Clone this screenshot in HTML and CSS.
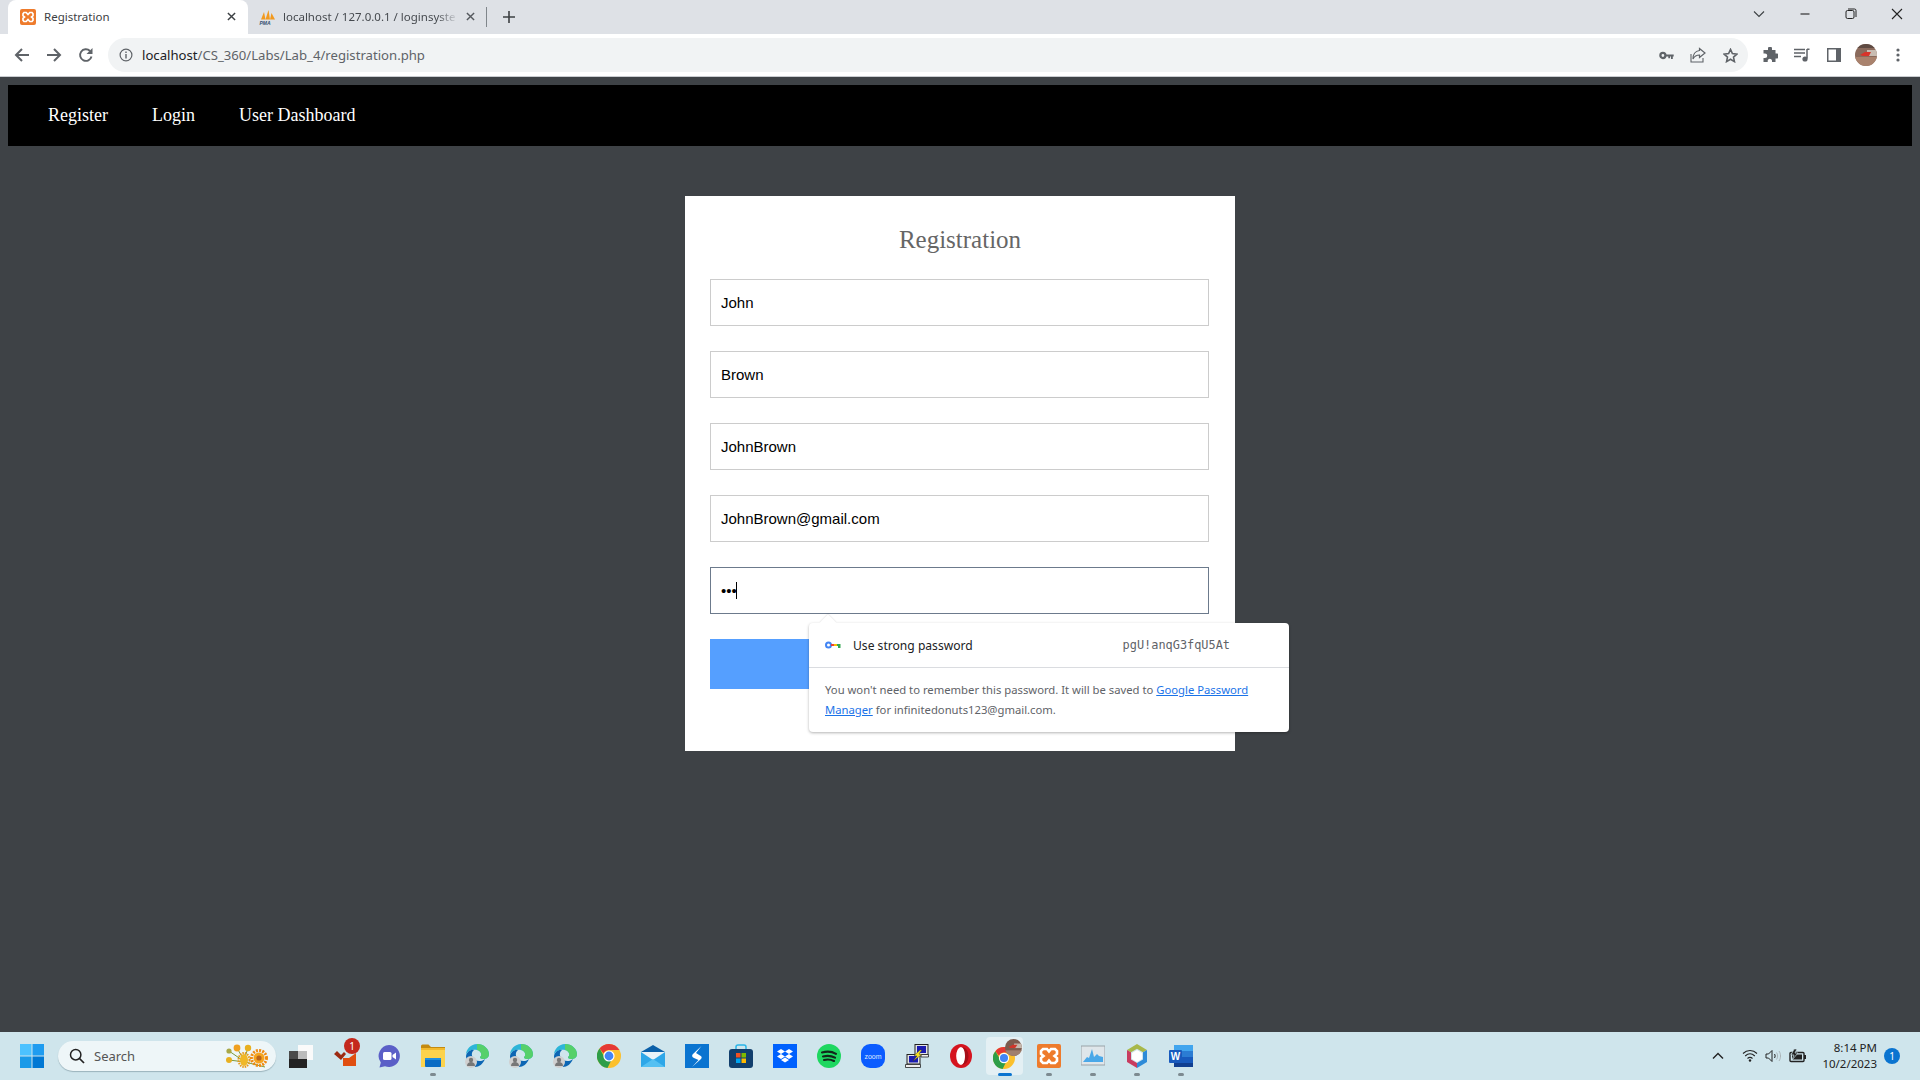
FILE: index.html
```html
<!DOCTYPE html>
<html lang="en">
<head>
<meta charset="utf-8">
<title>Registration</title>
<link rel="stylesheet" href="styles.css">
</head>
<body>
<div class="screen">
  <header class="chrome">
    <div class="tabstrip">
      <div class="tab tab-active">
        <svg class="favicon" viewBox="0 0 16 16"><rect width="16" height="16" rx="2" fill="#ee7b2c"/><path d="M4 3.500h2.200l1.800 2 1.800-2H12l1 1.200v2L11.500 8 13 9.300v2L12 12.500H9.800L8 10.500l-1.800 2H4l-1-1.200v-2L4.500 8 3 6.700v-2z" fill="none" stroke="#fff" stroke-width="1.700"/></svg>
        <span class="tab-title">Registration</span>
        <svg class="tab-close" viewBox="0 0 10 10"><path d="M1 1l8 8M9 1l-8 8" stroke="#3c4043" stroke-width="1.600"/></svg>
      </div>
      <div class="tab tab-idle">
        <svg class="favicon" viewBox="0 0 18 16"><path d="M2 10.500L5 3l1.500 7.500zM6.500 10.500L9.500 1l1.500 9.500zM11 10.500L12.500 4l3.500 6.500z" fill="#f29a1f"/><text x="0.500" y="15.500" class="pma">PMA</text></svg>
        <span class="tab-title tab-title-fade">localhost / 127.0.0.1 / loginsyste</span>
        <svg class="tab-close" viewBox="0 0 10 10"><path d="M1 1l8 8M9 1l-8 8" stroke="#55595e" stroke-width="1.600"/></svg>
      </div>
      <span class="tab-sep"></span>
      <svg class="new-tab" viewBox="0 0 12 12"><path d="M6 0v12M0 6h12" stroke="#3c4043" stroke-width="1.600"/></svg>
      <div class="caption">
        <span class="cap-btn"><svg viewBox="0 0 12 8" width="12" height="8"><path d="M1 1.500l5 5 5-5" fill="none" stroke="#3c4043" stroke-width="1.100"/></svg></span>
        <span class="cap-btn"><svg viewBox="0 0 12 8" width="12" height="8"><path d="M1.500 4h9" stroke="#222" stroke-width="1.100"/></svg></span>
        <span class="cap-btn"><svg viewBox="0 0 12 12" width="12" height="12"><rect x="1" y="2.500" width="8" height="8" rx="1.500" fill="none" stroke="#222"/><path d="M3 1h6.500A1.500 1.500 0 0 1 11 2.500V9" fill="none" stroke="#222"/></svg></span>
        <span class="cap-btn"><svg viewBox="0 0 12 12" width="12" height="12"><path d="M1 1l10 10M11 1L1 11" stroke="#222" stroke-width="1.100"/></svg></span>
      </div>
    </div>
    <div class="toolbar">
      <span class="tool"><svg viewBox="0 0 16 16" width="16" height="16"><path d="M15 8H2M8 2L2 8l6 6" fill="none" stroke="#5f6368" stroke-width="2"/></svg></span>
      <span class="tool"><svg viewBox="0 0 16 16" width="16" height="16"><path d="M1 8h13M8 2l6 6-6 6" fill="none" stroke="#5f6368" stroke-width="2"/></svg></span>
      <span class="tool"><svg viewBox="0 0 16 16" width="16" height="16"><path d="M13.500 9.500A5.800 5.800 0 1 1 12 4" fill="none" stroke="#5f6368" stroke-width="1.900"/><path d="M14.500 1v6h-6z" fill="#5f6368"/></svg></span>
      <div class="omnibox">
        <svg class="info" viewBox="0 0 14 14"><circle cx="7" cy="7" r="5.900" fill="none" stroke="#5f6368" stroke-width="1.200"/><path d="M7 6v4.500M7 3.500v1.500" stroke="#5f6368" stroke-width="1.400"/></svg>
        <span class="url"><span class="url-host">localhost</span>/CS_360/Labs/Lab_4/registration.php</span>
        <div class="omni-actions">
          <span class="omni-btn"><svg viewBox="0 0 16 10" width="15" height="9"><circle cx="4" cy="5" r="2.800" fill="none" stroke="#5f6368" stroke-width="2.500"/><path d="M7 4h9v2h-1v3h-2V6h-1v2H10V6H7z" fill="#5f6368"/></svg></span>
          <span class="omni-btn"><svg viewBox="0 0 16 16" width="16" height="16"><path d="M1 7v8h12v-4" fill="none" stroke="#5f6368" stroke-width="1.100"/><path d="M9.500 1.500l5.500 4.500-5.500 4.500V8C6.500 8 4.500 9 3 12c0-4 2-8 6.500-8.500z" fill="none" stroke="#5f6368" stroke-width="1.200"/></svg></span>
          <span class="omni-btn"><svg viewBox="0 0 16 16" width="15" height="15"><path d="M8 1.500l2 4.500 4.800.5-3.600 3.200 1 4.800L8 12l-4.200 2.500 1-4.800L1.200 6.500 6 6z" fill="none" stroke="#5f6368" stroke-width="1.700"/></svg></span>
        </div>
      </div>
      <span class="tool"><svg viewBox="0 0 16 16" width="16" height="16"><path d="M6 1.500a2 2 0 0 1 4 0V3h3.500v3.500H15a2.300 2.300 0 0 1 0 5h-1.500V15H10v-1.500a2.200 2.200 0 0 0-4.300 0V15H1.500v-4H3a2 2 0 0 0 0-4.500H1.500V3H6z" fill="#5f6368"/></svg></span>
      <span class="tool"><svg viewBox="0 0 16 14" width="16" height="14"><path d="M0 1.500h11M0 5h11M0 8.500h7" stroke="#5f6368" stroke-width="1.300"/><path d="M13 1v9.500" stroke="#5f6368" stroke-width="1.500"/><path d="M13 .5h2.500V2H13z" fill="#5f6368"/><circle cx="11" cy="11" r="2.600" fill="#5f6368"/></svg></span>
      <span class="tool"><svg viewBox="0 0 14 14" width="14" height="14"><rect width="14" height="14" fill="#5f6368"/><rect x="1.500" y="1.500" width="7.500" height="11" fill="#fff"/></svg></span>
      <span class="tool"><svg viewBox="0 0 22 22" width="22" height="22"><defs><clipPath id="av"><circle cx="11" cy="11" r="11"/></clipPath></defs><g clip-path="url(#av)"><rect width="22" height="22" fill="#8a6a5c"/><rect y="13" width="22" height="9" fill="#a9826d"/><rect x="12" y="6" width="10" height="6" fill="#c9bdb3"/><path d="M5 11l5-3h6l-2 4H8z" fill="#d8342a"/><rect y="0" width="22" height="4" fill="#5e4a42"/></g></svg></span>
      <span class="tool"><svg viewBox="0 0 4 14" width="4" height="14"><circle cx="2" cy="2" r="1.600" fill="#5f6368"/><circle cx="2" cy="7" r="1.600" fill="#5f6368"/><circle cx="2" cy="12" r="1.600" fill="#5f6368"/></svg></span>
    </div>
  </header>

  <main class="page">
    <nav class="topnav">
      <a class="navlink">Register</a>
      <a class="navlink">Login</a>
      <a class="navlink">User Dashboard</a>
    </nav>
    <section class="card">
      <h2 class="card-title">Registration</h2>
      <form class="form">
        <input class="field" type="text" value="John" readonly>
        <input class="field" type="text" value="Brown" readonly>
        <input class="field" type="text" value="JohnBrown" readonly>
        <input class="field" type="text" value="JohnBrown@gmail.com" readonly>
        <div class="field-wrap">
          <input class="field field-focus" type="password" value="abc" readonly>
          <span class="caret"></span>
        </div>
        <div class="submit"></div>
      </form>
      <div class="pw-popup">
        <span class="pw-arrow"></span>
        <div class="pw-row">
          <svg class="pw-key" viewBox="0 0 16 8"><circle cx="3.500" cy="4" r="2.500" fill="none" stroke="#4285f4" stroke-width="2"/><path d="M6 4h3" stroke="#ea4335" stroke-width="2"/><path d="M9 3h3.500v2H9z" fill="#fbbc04"/><path d="M12 3h3.500v4H13V5h-1z" fill="#34a853"/></svg>
          <span class="pw-label">Use strong password</span>
          <span class="pw-value">pgU!anqG3fqU5At</span>
        </div>
        <div class="pw-note">
          <div class="pw-line">You won't need to remember this password. It will be saved to <a class="pw-link">Google Password</a></div>
          <div class="pw-line"><a class="pw-link">Manager</a> for infinitedonuts123@gmail.com.</div>
        </div>
      </div>
    </section>
  </main>

  <footer class="taskbar">
    <svg class="win" viewBox="0 0 24 24"><rect width="11.500" height="11.500" fill="#4cc2ff"/><rect x="12.500" width="11.500" height="11.500" fill="#1f9cf0"/><rect y="12.500" width="11.500" height="11.500" fill="#1a9ae8"/><rect x="12.500" y="12.500" width="11.500" height="11.500" fill="#0078d4"/></svg>
    <div class="search">
      <svg class="search-icon" viewBox="0 0 16 16"><circle cx="6.700" cy="6.700" r="5.200" fill="none" stroke="#222" stroke-width="1.500"/><path d="M10.500 10.500l4.500 4.500" stroke="#222" stroke-width="1.700"/></svg>
      <span class="search-text">Search</span>
      <svg class="flowers" viewBox="0 0 48 26"><path d="M5 8l16 11 20 5M13 5l8 14M24 5l-4 12M5 17l16 2" stroke="#7d9a3a" fill="none"/><circle cx="5" cy="8" r="2.600" fill="#a8a848"/><circle cx="13" cy="5" r="3.400" fill="#f0a020"/><circle cx="24" cy="5" r="3.200" fill="#e8b020"/><circle cx="5" cy="17" r="3" fill="#e8b020"/><ellipse cx="20" cy="17" rx="4" ry="6" fill="#f0b828"/><ellipse cx="20" cy="17" rx="5.500" ry="7" fill="none" stroke="#e89a18" stroke-width="2" stroke-dasharray="1.500 1"/><circle cx="35" cy="15" r="5.500" fill="#f6a520"/><circle cx="35" cy="15" r="7.500" fill="none" stroke="#f08a10" stroke-width="3" stroke-dasharray="2 1.200"/><circle cx="35" cy="15" r="2.600" fill="#b9651c"/></svg>
    </div>
    <div class="apps">
      <span class="app"><svg viewBox="0 0 24 24"><rect x="9" y="1" width="15" height="15" fill="#fafafa"/><rect x="9" y="7" width="9" height="9" fill="#b8b8b8"/><rect y="7" width="18" height="17" fill="#222"/><rect y="7" width="18" height="8" fill="#4a4a4a"/><rect x="9" y="7" width="9" height="8" fill="#bbb"/></svg></span>
      <span class="app"><svg viewBox="0 0 24 24"><path d="M1 10l3-3 4 4 3-3 2 2-5 6z" fill="#9c2a12"/><rect x="10" y="14" width="13" height="8" fill="#e04e10"/><path d="M16 14h7V9z" fill="#e04e10"/></svg><span class="app-badge">1</span></span>
      <span class="app"><svg viewBox="0 0 24 24"><path d="M12 1a11 11 0 1 1-4 21.300L2.500 23.500l1.300-5A11 11 0 0 1 12 1z" fill="#5b5fc7"/><rect x="6" y="8" width="8.500" height="8" rx="1.500" fill="#fff"/><path d="M15.500 11l3.500-2.500v7L15.500 13z" fill="#fff"/></svg></span>
      <span class="app app-open"><svg viewBox="0 0 24 24"><path d="M0 2a1.500 1.500 0 0 1 1.500-1.500h6L10 3h14v4H0z" fill="#c48a10"/><path d="M0 4h24v19H0z" fill="#fcd34d"/><path d="M0 4h24v2H0z" fill="#f2b92c"/><rect x="4" y="14" width="16" height="9" rx="1" fill="#0a6cc4"/><rect x="4" y="14" width="16" height="2" fill="#1f8fe0"/></svg></span>
      <span class="app"><svg viewBox="0 0 24 24"><use href="#edge"/></svg></span>
      <span class="app"><svg viewBox="0 0 24 24"><use href="#edge"/></svg></span>
      <span class="app"><svg viewBox="0 0 24 24"><use href="#edge"/></svg></span>
      <span class="app"><svg viewBox="0 0 24 24"><use href="#gchrome"/></svg></span>
      <span class="app"><svg viewBox="0 0 24 24"><path d="M0 8l12-7 12 7v2H0z" fill="#0a5fa8"/><rect y="8" width="24" height="15" fill="#2ea7e8"/><path d="M0 8l12 8 12-8z" fill="#e8f2f8"/><path d="M0 23l12-8 12 8z" fill="#54c0f2"/></svg></span>
      <span class="app"><svg viewBox="0 0 24 24"><rect width="24" height="24" fill="#0a74d0"/><path d="M16.500 2L8 10c-1.500 1.500-1 3 1 4l4.500 2L7 23l9-8c1.200-1.500.8-2.500-1-3.500l-4-2.500z" fill="#fff"/></svg></span>
      <span class="app"><svg viewBox="0 0 24 24"><path d="M7 6V3a2 2 0 0 1 2-2h6a2 2 0 0 1 2 2v3" fill="none" stroke="#2bb5e8" stroke-width="1.500"/><rect y="5" width="24" height="19" rx="3" fill="#123f6d"/><rect x="7" y="9" width="4.500" height="4.500" fill="#f25022"/><rect x="12.500" y="9" width="4.500" height="4.500" fill="#7fba00"/><rect x="7" y="14.500" width="4.500" height="4.500" fill="#00a4ef"/><rect x="12.500" y="14.500" width="4.500" height="4.500" fill="#ffb900"/></svg></span>
      <span class="app"><svg viewBox="0 0 24 24"><rect width="24" height="24" fill="#0061fe"/><path d="M8 5l4 2.500L8 10 4 7.500zM16 5l4 2.500L16 10l-4-2.500zM8 10l4 2.500L8 15l-4-2.500zM16 10l4 2.500L16 15l-4-2.500zM8 16l4-2.500 4 2.500-4 2.500z" fill="#fff"/></svg></span>
      <span class="app"><svg viewBox="0 0 24 24"><circle cx="12" cy="12" r="12" fill="#1ed760"/><path d="M5 8.500c5-1.400 10-1 14 1.300M6 12.500c4-1 8.500-.7 12 1.200M7 16c3.300-.8 7-.5 10 1" fill="none" stroke="#12261a" stroke-width="2.100" stroke-linecap="round"/></svg></span>
      <span class="app"><svg viewBox="0 0 24 24"><rect width="24" height="24" rx="9" fill="#0b5cff"/><text x="12" y="14.500" class="zoom-word">zoom</text></svg></span>
      <span class="app"><svg viewBox="0 0 24 24"><rect x="10" y="0.500" width="13" height="10" fill="#e4e4e4" stroke="#222"/><rect x="12" y="2" width="9" height="7" fill="#1a1ab0"/><rect x="2" y="10.500" width="13" height="9.500" fill="#e4e4e4" stroke="#222"/><rect x="4" y="12" width="9" height="6.500" fill="#1a1ab0"/><path d="M.5 20.500h15v3H.5zM16 10.500h7.500v2.500H16z" fill="#eee" stroke="#222" stroke-width=".8"/><path d="M15 6l-6 5.500 3 .5-4 5 9-6.500-3-.5 3-4z" fill="#f5e020" stroke="#333" stroke-width=".5"/></svg></span>
      <span class="app"><svg viewBox="0 0 24 24"><ellipse cx="12" cy="12" rx="11" ry="12" fill="#d5141f"/><ellipse cx="12" cy="12" rx="4.800" ry="9" fill="#fff"/><path d="M12 3c2.400 0 4 4 4 9s-1.600 9-4 9c5 0 7.500-4 7.500-9S17 3 12 3z" fill="#a50f18"/></svg></span>
      <span class="app app-active"><svg viewBox="0 0 24 24"><use href="#gchrome"/></svg><svg class="app-avatar" viewBox="0 0 15 15"><defs><clipPath id="av2"><circle cx="7.500" cy="7.500" r="7.500"/></clipPath></defs><g clip-path="url(#av2)"><rect width="15" height="15" fill="#7c5a4d"/><rect y="10" width="15" height="5" fill="#a0806e"/><rect x="8" y="4" width="7" height="4" fill="#c5b8ad"/><path d="M3 7l4-2h4l-2 3H5z" fill="#d0362b"/></g></svg></span>
      <span class="app app-open"><svg viewBox="0 0 24 24"><rect width="24" height="24" rx="2" fill="#ee7b2c"/><path d="M6 5h4l2 2.500L14 5h4l2 2v3l-2.500 2L20 14v3l-2 2h-4l-2-2.500L10 19H6l-2-2v-3l2.500-2L4 10V7z" fill="none" stroke="#fff" stroke-width="2.600"/></svg></span>
      <span class="app app-open"><svg viewBox="0 0 24 24"><rect y="2" width="24" height="19" fill="#dfe6ea" stroke="#9aa3a8"/><path d="M2 18l4-5 2 1 3-9 2 8 3-3 2 2 4 1v5z" fill="#4aa8e8"/></svg></span>
      <span class="app app-open"><svg viewBox="0 0 24 24"><path d="M12 0l10 6-4 2.300-6-3.500-6 3.500L2 6z" fill="#a8b84a"/><path d="M2 6l4 2.300v7.200L12 19v5L2 18z" fill="#c83c60"/><path d="M22 6l-4 2.300v7.200L12 19v5l10-6z" fill="#2e8bd8"/><path d="M12 6l5 3v6l-5 3-5-3V9z" fill="#fff"/></svg></span>
      <span class="app app-open"><svg viewBox="0 0 24 24"><rect x="5" y="1" width="19" height="6" fill="#41a5ee"/><rect x="5" y="7" width="19" height="6" fill="#2b7cd3"/><rect x="5" y="13" width="19" height="6" fill="#185abd"/><rect x="5" y="19" width="19" height="4" fill="#103f91"/><rect y="6" width="13" height="13" rx="1" fill="#185abd"/><text x="6.500" y="16.300" class="word-w">W</text></svg></span>
    </div>
    <div class="tray">
      <svg class="tray-chev" viewBox="0 0 12 8"><path d="M1 6.500l5-5 5 5" fill="none" stroke="#222" stroke-width="1.400"/></svg>
      <svg class="tray-wifi" viewBox="0 0 16 13"><path d="M1 4.500c4-4 10-4 14 0M3.200 7c3-2.800 6.600-2.800 9.600 0M5.500 9.500c1.500-1.300 3.500-1.300 5 0" fill="none" stroke="#222" stroke-width="1.100"/><circle cx="8" cy="11.500" r="1.200" fill="#222"/></svg>
      <svg class="tray-vol" viewBox="0 0 17 14"><path d="M1 5h2.500L7 1.500v11L3.500 9H1z" fill="none" stroke="#222"/><path d="M9.500 5c.8 1.200.8 2.800 0 4" fill="none" stroke="#222"/><path d="M11.500 3.500c1.500 2 1.500 5 0 7M14 2c2 3 2 7 0 10" fill="none" stroke="#aab4b8"/></svg>
      <svg class="tray-bat" viewBox="0 0 18 14"><rect x="1" y="3.500" width="14" height="9" rx="1" fill="none" stroke="#222" stroke-width="1.400"/><rect x="3" y="5.500" width="10" height="5" fill="#222"/><rect x="15" y="6" width="2" height="4" fill="#222"/><path d="M5 0L2 6h3l-2 5 6-7H6l2-4z" fill="#222" stroke="#cfe5ec" stroke-width=".7"/></svg>
      <div class="clock"><span>8:14 PM</span><span>10/2/2023</span></div>
      <span class="notify">1</span>
    </div>
  </footer>
</div>
<svg class="defs" width="0" height="0">
  <defs>
    <g id="edge">
      <path d="M1 11C1 5 6 0 12 0c7 0 12 5 12 10 0 4-3 5-6 5-2 0-3-1-3-2 2-1 2-6-3-7C7 5 2 7 1 11z" fill="#2db5d8"/>
      <path d="M12 0c7 0 12 5 12 10 0 4-3 5-6 5-2 0-3-1-3-2 2-1 2-6-3-7z" fill="#56d06a"/>
      <path d="M1 12c1-5 6-7 8-6-3 2-3 7 1 10 4 2 8 1 10-1-2 5-6 8-10 8-5 0-9-5-9-11z" fill="#0c66b4"/>
      <circle cx="6" cy="18" r="6" fill="#d0d0d0"/>
      <circle cx="6" cy="16" r="2.200" fill="#777"/>
      <path d="M2 22c0-3 2-4 4-4s4 1 4 4z" fill="#777"/>
    </g>
    <g id="gchrome">
      <circle cx="12" cy="12" r="12" fill="#fbc02d"/>
      <path d="M12 0a12 12 0 0 1 10.400 6H12a6 6 0 0 0-5.500 3.600L2.600 4.500A12 12 0 0 1 12 0z" fill="#e53935"/>
      <path d="M2.600 4.500l5 8.700a5 5 0 0 0 6.500 3.500L10.500 24A12 12 0 0 1 2.600 4.500z" fill="#2e9e48"/>
      <circle cx="12" cy="12" r="5.600" fill="#fff"/>
      <circle cx="12" cy="12" r="4.400" fill="#4285f4"/>
    </g>
  </defs>
</svg>
</body>
</html>
```

FILE: styles.css
```css
* { box-sizing: border-box; }
html, body { margin: 0; padding: 0; height: 100%; overflow: hidden; }
body { background: #3e4246; font-family: "Liberation Serif", serif; }
.defs { display: block; height: 0; }
.screen { display: flex; flex-direction: column; height: 1080px; }

/* Browser chrome */
.chrome { flex: none; font-family: "Noto Sans", sans-serif; }
.tabstrip { display: flex; align-items: stretch; height: 34px; background: #dee1e6; padding-left: 8px; }
.tab { display: flex; align-items: center; width: 240px; padding: 0 12px 1px; font-size: 11.500px; color: #3c4043; }
.tab-active { background: #fff; border-radius: 8px 8px 0 0; height: 34px; }
.tab-idle { padding-left: 11px; padding-right: 13px; }
.favicon { width: 16px; height: 16px; flex: none; margin-right: 8px; }
.tab-idle .favicon { width: 18px; height: 16px; margin-right: 6px; }
.pma { font: italic bold 5px "Liberation Sans", sans-serif; fill: #34506e; }
.tab-title { flex: 1; white-space: nowrap; overflow: hidden; }
.tab-title-fade { color: #45494e; -webkit-mask-image: linear-gradient(to right, #000 88%, transparent); mask-image: linear-gradient(to right, #000 88%, transparent); }
.tab-close { width: 9px; height: 9px; flex: none; margin-left: 8px; }
.tab-sep { align-self: center; width: 1px; height: 20px; background: #80868b; margin-left: -2px; }
.new-tab { align-self: center; width: 12px; height: 12px; margin-left: 16px; }
.caption { display: flex; margin-left: auto; }
.cap-btn { display: flex; align-items: center; justify-content: center; width: 46px; height: 28px; }

.toolbar { display: flex; align-items: center; height: 43px; padding: 0 6px; background: #fff; border-bottom: 1px solid #c9ccd0; }
.tool { display: flex; align-items: center; justify-content: center; width: 32px; height: 32px; flex: none; }
.omnibox { flex: 1; display: flex; align-items: center; height: 34px; margin: 0 6px; padding: 0 5px 0 8px; background: #f1f3f4; border-radius: 17px; }
.info { width: 14px; height: 14px; margin: 0 3px; flex: none; }
.url { margin-left: 6px; font-size: 13.150px; color: #5f6368; white-space: nowrap; }
.url-host { color: #202124; }
.omni-actions { display: flex; gap: 6px; margin-left: auto; }
.omni-btn { display: flex; align-items: center; justify-content: center; width: 26px; height: 26px; }

/* Page */
.page { flex: 1; min-height: 0; padding: 8px; position: relative; }
.topnav { display: flex; align-items: center; gap: 44px; height: 61px; padding-left: 40px; background: #000; }
.navlink { color: #fff; font-size: 18px; }
.card { position: relative; width: 550px; height: 555px; margin: 50px auto 0; padding: 29px 25px 0; background: #fff; }
.card-title { margin: 0 0 25px; font-weight: 400; font-size: 25px; line-height: 29px; text-align: center; color: #666; }
.form { display: flex; flex-direction: column; gap: 25px; }
.field { display: block; width: 499px; height: 47px; padding: 0 10px; border: 1px solid #ccc; border-radius: 0; background: #fff; color: #000; font: 15px "Liberation Sans", sans-serif; outline: none; }
.field-wrap { position: relative; width: 499px; }
.field-focus { border-color: #6c7a8c; }
.caret { position: absolute; left: 26px; top: 15px; width: 1px; height: 17px; background: #000; }
.submit { width: 499px; height: 50px; background: #559fff; }

/* Password popup */
.pw-popup { position: absolute; left: 124px; top: 427px; width: 480px; height: 109px; background: #fff; border-radius: 4px; box-shadow: 0 1px 3px rgba(0,0,0,.3); font-family: "Noto Sans", sans-serif; }
.pw-arrow { position: absolute; left: 13px; top: -6px; width: 12px; height: 12px; background: #fff; transform: rotate(45deg); box-shadow: -1px -1px 1px rgba(0,0,0,.06); }
.pw-row { position: relative; display: flex; align-items: center; height: 45px; padding: 0 16px; border-bottom: 1px solid #dadce0; }
.pw-key { width: 16px; height: 8px; flex: none; margin-right: 12px; }
.pw-label { font-size: 12.100px; color: #202124; }
.pw-value { margin-left: auto; margin-right: 43px; font: 11.900px "DejaVu Sans Mono", monospace; color: #5f6368; }
.pw-note { margin: 12px 0 0; padding: 0 16px; font-size: 11.270px; line-height: 20px; color: #5f6368; }
.pw-line { white-space: nowrap; }
.pw-link { color: #1a73e8; text-decoration: underline; }

/* Taskbar */
.taskbar { flex: none; display: flex; align-items: center; height: 48px; background: #cfe5ec; padding: 0 0 1px 20px; font-family: "Noto Sans", sans-serif; }
.win { width: 24px; height: 24px; flex: none; }
.search { display: flex; align-items: center; width: 218px; height: 30px; margin-left: 14px; padding: 0 4px 0 11px; border-radius: 15px; background: #eef6f8; box-shadow: 0 1px 1px rgba(60,90,100,.35); }
.search-icon { width: 16px; height: 16px; flex: none; }
.search-text { margin-left: 9px; font-size: 13px; color: #555; }
.flowers { width: 48px; height: 26px; margin-left: auto; }
.apps { display: flex; margin-left: 3px; }
.app { position: relative; display: flex; align-items: center; justify-content: center; width: 44px; height: 46px; flex: none; }
.app > svg:first-child { width: 24px; height: 24px; }
.app-open::after { content: ""; position: absolute; left: 19px; bottom: 3px; width: 6px; height: 3px; border-radius: 2px; background: #7d8a90; }
.app-active { isolation: isolate; }
.app-active::before { content: ""; position: absolute; left: 3px; top: 4px; width: 37px; height: 38px; border-radius: 4px; background: #e4f0f4; z-index: -1; }
.app-active > svg:first-child { width: 22px; height: 22px; margin: 4px 3px 0 0; }
.app-active::after { content: ""; position: absolute; left: 15px; bottom: 3px; width: 14px; height: 3px; border-radius: 2px; background: #0a74d0; }
.app-badge { position: absolute; left: 21px; top: 5px; width: 16px; height: 16px; border-radius: 50%; background: #c4281c; color: #fff; font-size: 10px; line-height: 16px; text-align: center; }
.app-avatar { position: absolute; left: 22px; top: 6px; width: 17px; height: 17px; }
.zoom-word { font: 7px "Liberation Sans", sans-serif; fill: #dfe9ff; text-anchor: middle; }
.word-w { font: bold 10px "Liberation Sans", sans-serif; fill: #fff; text-anchor: middle; }
.tray { display: flex; align-items: center; margin-left: auto; padding-right: 20px; color: #222; }
.tray-chev { width: 12px; height: 8px; }
.tray-wifi { width: 16px; height: 13px; margin-left: 18px; }
.tray-vol { width: 17px; height: 14px; margin-left: 7px; }
.tray-bat { width: 18px; height: 14px; margin-left: 7px; }
.clock { display: flex; flex-direction: column; align-items: flex-end; margin-left: 15.500px; font-size: 11.500px; line-height: 16px; }
.notify { width: 16px; height: 16px; margin-left: 7px; border-radius: 50%; background: #0a74d0; color: #fff; font-size: 10px; line-height: 16px; text-align: center; }
```
